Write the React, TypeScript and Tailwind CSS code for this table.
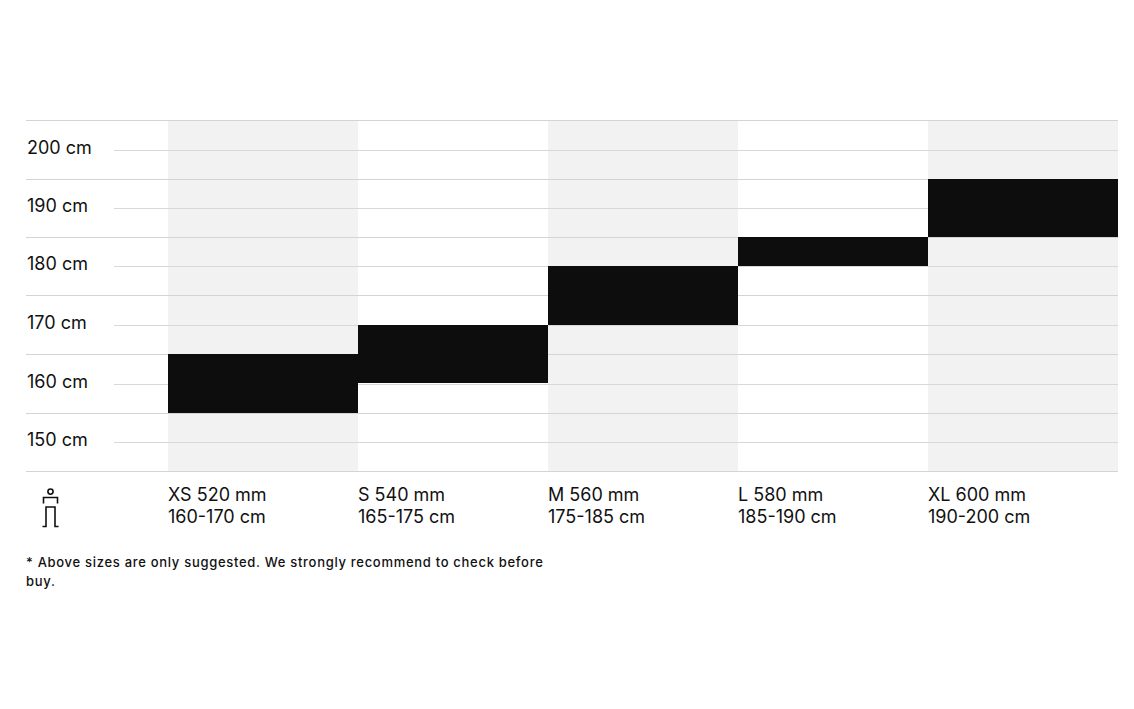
const rows = ['200 cm', '190 cm', '180 cm', '170 cm', '160 cm', '150 cm']
const rowHeights = ['h-[59px]', 'h-[58px]', 'h-[58px]', 'h-[59px]', 'h-[59px]', 'h-[58px]']

type Size = {
  name: string
  range: string
  shaded: boolean
  barTop: string
  barHeight: string
}

// bar offsets are measured from the top line of the chart
const sizes: Size[] = [
  { name: 'XS 520 mm', range: '160-170 cm', shaded: true, barTop: 'mt-[234px]', barHeight: 'h-[59px]' },
  { name: 'S 540 mm', range: '165-175 cm', shaded: false, barTop: 'mt-[205px]', barHeight: 'h-[58px]' },
  { name: 'M 560 mm', range: '175-185 cm', shaded: true, barTop: 'mt-[146px]', barHeight: 'h-[59px]' },
  { name: 'L 580 mm', range: '185-190 cm', shaded: false, barTop: 'mt-[117px]', barHeight: 'h-[29px]' },
  { name: 'XL 600 mm', range: '190-200 cm', shaded: true, barTop: 'mt-[59px]', barHeight: 'h-[58px]' },
]

function PersonIcon() {
  return (
    <svg width="18" height="40" viewBox="0 0 18 40" fill="none" stroke="#111" strokeWidth="1.6">
      <circle cx="8.5" cy="3.6" r="2.6" />
      <path d="M1.5 15.5V9.5H15.5V15.5" />
      <path d="M0.5 38.5H4V19H13V38.5H16.5" />
    </svg>
  )
}

export default function App() {
  return (
    <div
      className="w-[1134px] h-[709px] bg-white pt-[120px] pl-[26px] pr-[16px] text-[#111]"
      style={{ fontFamily: 'Inter, "Noto Sans", sans-serif' }}
    >
      {/* Chart */}
      <div className="relative h-[352px]">
        {/* Shaded columns */}
        <div className="absolute inset-0 flex">
          <div className="w-[142px] shrink-0" />
          {sizes.map((s) => (
            <div key={s.name} className={`flex-1 ${s.shaded ? 'bg-[#f2f2f2]' : ''}`} />
          ))}
        </div>

        {/* Grid lines + labels */}
        <div className="relative flex flex-col border-b border-[#d4d4d4]">
          {rows.map((label, i) => (
            <div key={label} className={`flex items-center border-t border-[#d4d4d4] ${rowHeights[i]}`}>
              <div className="w-[88px] shrink-0 pl-px pb-[5px] text-[18px] leading-none">{label}</div>
              <div className="flex-1 h-px bg-[#d8d8d8]" />
            </div>
          ))}
        </div>

        {/* Bars */}
        <div className="absolute inset-0 flex">
          <div className="w-[142px] shrink-0" />
          {sizes.map((s) => (
            <div key={s.name} className="flex-1">
              <div className={`bg-[#0d0d0d] ${s.barTop} ${s.barHeight}`} />
            </div>
          ))}
        </div>
      </div>

      {/* Size labels */}
      <div className="flex pt-[12px]">
        <div className="w-[142px] shrink-0 pl-[16px] pt-[4px]">
          <PersonIcon />
        </div>
        {sizes.map((s) => (
          <div key={s.name} className="flex-1 text-[18px] leading-[22px]">
            <div>{s.name}</div>
            <div>{s.range}</div>
          </div>
        ))}
      </div>

      <p className="mt-[25px] w-[530px] text-[13px] leading-[19px] font-medium tracking-[0.7px]">
        * Above sizes are only suggested. We strongly recommend to check before buy.
      </p>
    </div>
  )
}
